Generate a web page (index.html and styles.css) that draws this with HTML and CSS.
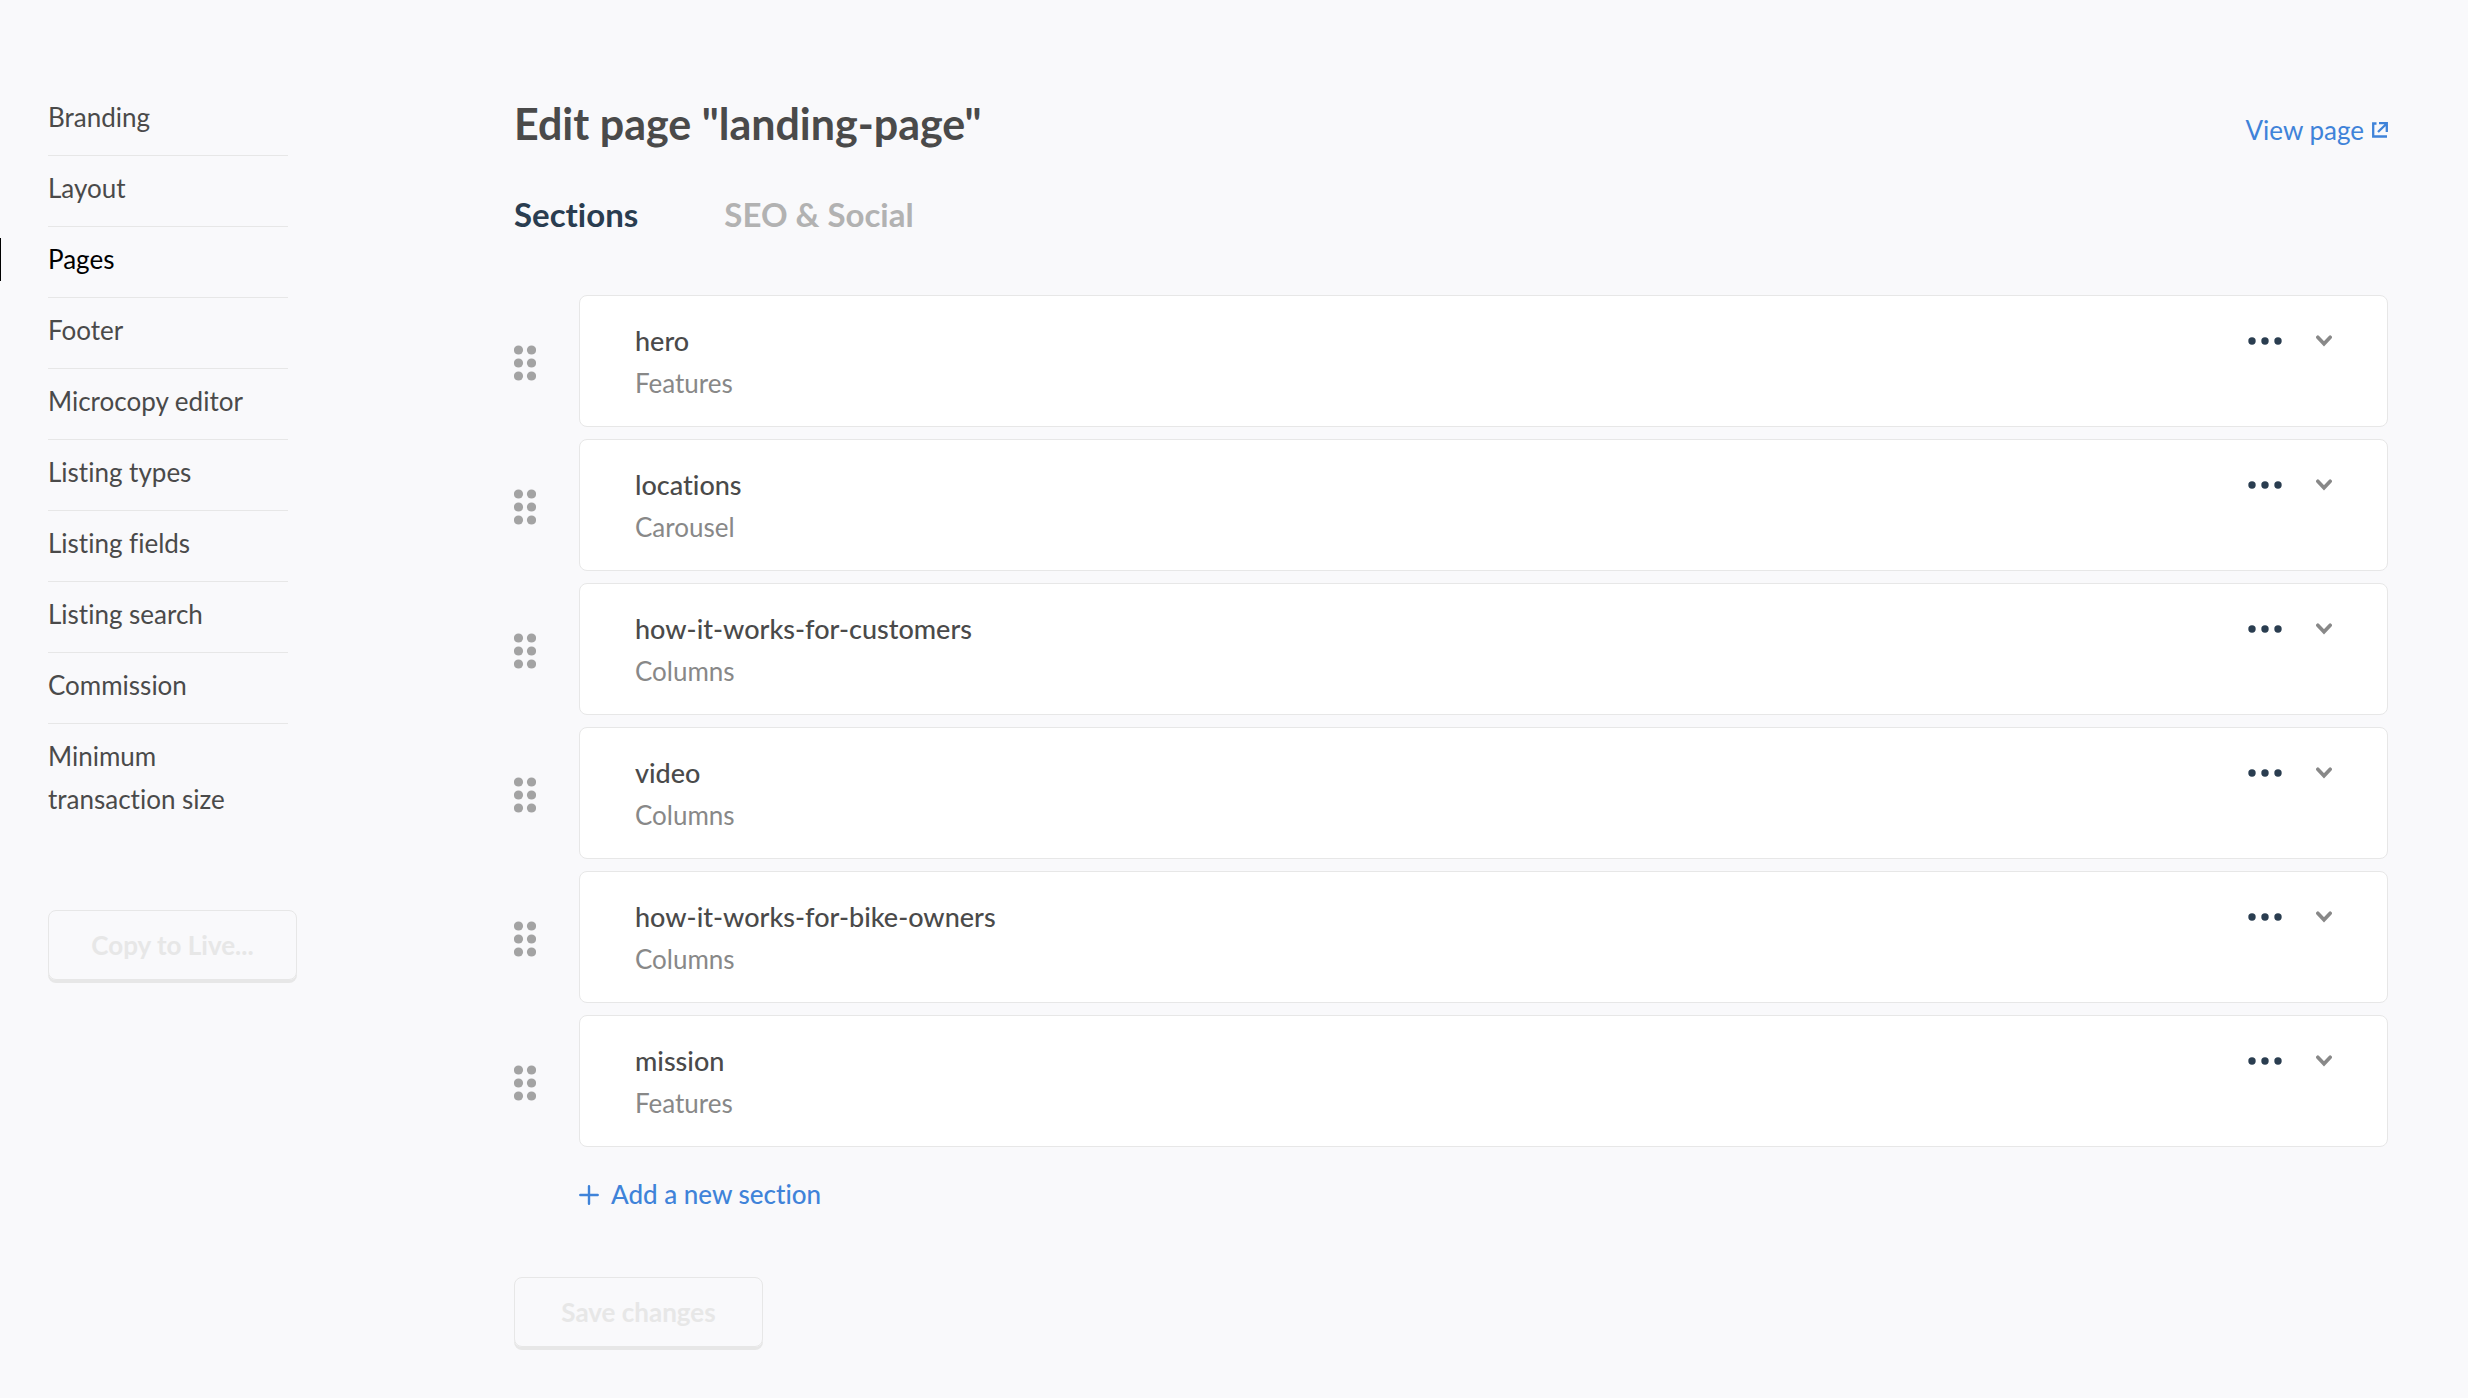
FILE: index.html
```html
<!DOCTYPE html>
<html lang="en">
<head>
<meta charset="utf-8">
<title>Edit page "landing-page"</title>
<meta name="viewport" content="width=device-width, initial-scale=1">
<link rel="stylesheet" href="styles.css">
</head>
<body>
<svg class="sprite" aria-hidden="true">
  <symbol id="grip" viewBox="0 0 22 36">
    <circle cx="4.5" cy="5" r="4.6"/><circle cx="17.5" cy="5" r="4.6"/>
    <circle cx="4.5" cy="18" r="4.6"/><circle cx="17.5" cy="18" r="4.6"/>
    <circle cx="4.5" cy="31" r="4.6"/><circle cx="17.5" cy="31" r="4.6"/>
  </symbol>
  <symbol id="dots" viewBox="0 0 34 8">
    <circle cx="4" cy="4" r="3.7"/><circle cx="17" cy="4" r="3.7"/><circle cx="30" cy="4" r="3.7"/>
  </symbol>
  <symbol id="chevron" viewBox="0 0 16 12">
    <path d="M1.800 2.200 8 8.800 14.200 2.200" fill="none" stroke="currentColor" stroke-width="3.600" stroke-linecap="round"/>
  </symbol>
</svg>
<div class="layout">
  <aside class="sidebar">
    <nav>
      <ul class="menu">
        <li><a href="#">Branding</a></li>
        <li><a href="#">Layout</a></li>
        <li class="current"><a href="#" aria-current="page">Pages</a></li>
        <li><a href="#">Footer</a></li>
        <li><a href="#">Microcopy editor</a></li>
        <li><a href="#">Listing types</a></li>
        <li><a href="#">Listing fields</a></li>
        <li><a href="#">Listing search</a></li>
        <li><a href="#">Commission</a></li>
        <li><a href="#">Minimum transaction size</a></li>
      </ul>
    </nav>
    <button class="button" type="button" disabled>Copy to Live...</button>
  </aside>
  <main class="main">
    <header class="head">
      <h1>Edit page "landing-page"</h1>
      <a class="view" href="#">View page
        <svg width="16" height="16" viewBox="0 0 16 16" fill="none" stroke="currentColor" stroke-width="2.300" aria-hidden="true"><path d="M4.500 1.500H1.200V14.500H15M7 1.200H14.800V10M14.500 1.700 6 10"/></svg></a>
    </header>
    <nav class="tabs">
      <a class="tab active" href="#">Sections</a>
      <a class="tab" href="#">SEO &amp; Social</a>
    </nav>
    <ul class="sections">
      <li class="row">
        <button class="icon grip" type="button" aria-label="Reorder"><svg><use href="#grip"/></svg></button>
        <article class="card"><div><h2>hero</h2><p>Features</p></div>
          <div class="actions"><button class="icon dots" type="button" aria-label="More"><svg><use href="#dots"/></svg></button><button class="icon chevron" type="button" aria-label="Expand"><svg><use href="#chevron"/></svg></button></div></article>
      </li>
      <li class="row">
        <button class="icon grip" type="button" aria-label="Reorder"><svg><use href="#grip"/></svg></button>
        <article class="card"><div><h2>locations</h2><p>Carousel</p></div>
          <div class="actions"><button class="icon dots" type="button" aria-label="More"><svg><use href="#dots"/></svg></button><button class="icon chevron" type="button" aria-label="Expand"><svg><use href="#chevron"/></svg></button></div></article>
      </li>
      <li class="row">
        <button class="icon grip" type="button" aria-label="Reorder"><svg><use href="#grip"/></svg></button>
        <article class="card"><div><h2>how-it-works-for-customers</h2><p>Columns</p></div>
          <div class="actions"><button class="icon dots" type="button" aria-label="More"><svg><use href="#dots"/></svg></button><button class="icon chevron" type="button" aria-label="Expand"><svg><use href="#chevron"/></svg></button></div></article>
      </li>
      <li class="row">
        <button class="icon grip" type="button" aria-label="Reorder"><svg><use href="#grip"/></svg></button>
        <article class="card"><div><h2>video</h2><p>Columns</p></div>
          <div class="actions"><button class="icon dots" type="button" aria-label="More"><svg><use href="#dots"/></svg></button><button class="icon chevron" type="button" aria-label="Expand"><svg><use href="#chevron"/></svg></button></div></article>
      </li>
      <li class="row">
        <button class="icon grip" type="button" aria-label="Reorder"><svg><use href="#grip"/></svg></button>
        <article class="card"><div><h2>how-it-works-for-bike-owners</h2><p>Columns</p></div>
          <div class="actions"><button class="icon dots" type="button" aria-label="More"><svg><use href="#dots"/></svg></button><button class="icon chevron" type="button" aria-label="Expand"><svg><use href="#chevron"/></svg></button></div></article>
      </li>
      <li class="row">
        <button class="icon grip" type="button" aria-label="Reorder"><svg><use href="#grip"/></svg></button>
        <article class="card"><div><h2>mission</h2><p>Features</p></div>
          <div class="actions"><button class="icon dots" type="button" aria-label="More"><svg><use href="#dots"/></svg></button><button class="icon chevron" type="button" aria-label="Expand"><svg><use href="#chevron"/></svg></button></div></article>
      </li>
    </ul>
    <button class="add" type="button"><svg width="20" height="20" viewBox="0 0 20 20" fill="none" stroke="currentColor" stroke-width="2.400" stroke-linecap="round" aria-hidden="true"><path d="M10 1.300V18.700M1.300 10H18.700"/></svg>Add a new section</button>
    <button class="button" type="submit" disabled>Save changes</button>
  </main>
</div>
</body>
</html>
```
FILE: styles.css
```css
* { box-sizing: border-box; }
body {
  margin: 0;
  background: #f9f9fb;
  color: #4a4a4a;
  font: 400 26px/43px Lato, "Open Sans", sans-serif;
  font-variant-ligatures: none;
}
h1, h2, p, ul { margin: 0; padding: 0; }
ul { list-style: none; }
a { color: inherit; text-decoration: none; }
button { font: inherit; font-variant-ligatures: none; color: inherit; background: none; border: 0; padding: 0; }
.sprite { display: none; }

.layout { display: flex; align-items: flex-start; }

.sidebar { flex: none; width: 514px; padding: 85px 0 0; }
.menu li {
  padding: 11px 0 16px;
  margin: 0 226px 0 48px;
  border-bottom: 1px solid #e7e7e7;
}
.menu li:last-child { border-bottom: 0; padding-right: 40px; }
.menu a { display: block; }
.menu .current { margin-left: 0; border-bottom: 0; padding-bottom: 0; color: #000; }
.menu .current a { border-left: 1px solid #000; padding-left: 47px; }
.menu .current::after {
  content: "";
  display: block;
  height: 1px;
  margin: 16px 0 0 48px;
  background: #e7e7e7;
}

.button {
  min-width: 249px;
  height: 70px;
  padding: 0 40px;
  border: 1px solid #e7e7e7;
  border-radius: 8px;
  box-shadow: 0 3px 0 #e7e7e7;
  color: #e7e7e7;
  font-weight: 700;
}
.sidebar .button { margin: 73px 0 0 48px; }

.main { flex: 1; min-width: 0; padding: 89px 80px 46px 0; }
.head { display: flex; justify-content: space-between; align-items: center; }
h1 { font-size: 43px; line-height: 70px; font-weight: 700; }
.view { display: flex; align-items: center; gap: 8px; color: #3f83d9; padding-top: 12px; }

.tabs { display: flex; gap: 86px; margin-top: 31px; font-size: 33px; line-height: 48px; font-weight: 700; }
.tab { color: #b2b2b2; }
.tab.active { color: #2a3d50; }

.sections { display: grid; gap: 12px; margin-top: 57px; }
.row { display: flex; align-items: center; }
.icon { display: flex; align-items: center; justify-content: center; fill: currentColor; }
.grip { flex: none; width: 22px; margin-right: 43px; padding-top: 4px; color: #a3a3a3; }
.grip svg { width: 22px; height: 36px; }
.card {
  flex: 1;
  display: flex;
  justify-content: space-between;
  height: 132px;
  padding: 23px 55px;
  border: 1px solid #e7e7e7;
  border-radius: 8px;
  background: #fff;
}
h2 { font-size: 27px; line-height: 43px; font-weight: 500; }
.card p { color: #888; }
.actions { display: flex; gap: 34px; height: 44px; }
.dots { color: #2a3d50; }
.dots svg { width: 34px; height: 8px; }
.chevron { color: #888; }
.chevron svg { width: 16px; height: 12px; }

.add { display: flex; align-items: center; gap: 12px; margin: 26px 0 61px 65px; color: #3f83d9; font-weight: 500; }
```
